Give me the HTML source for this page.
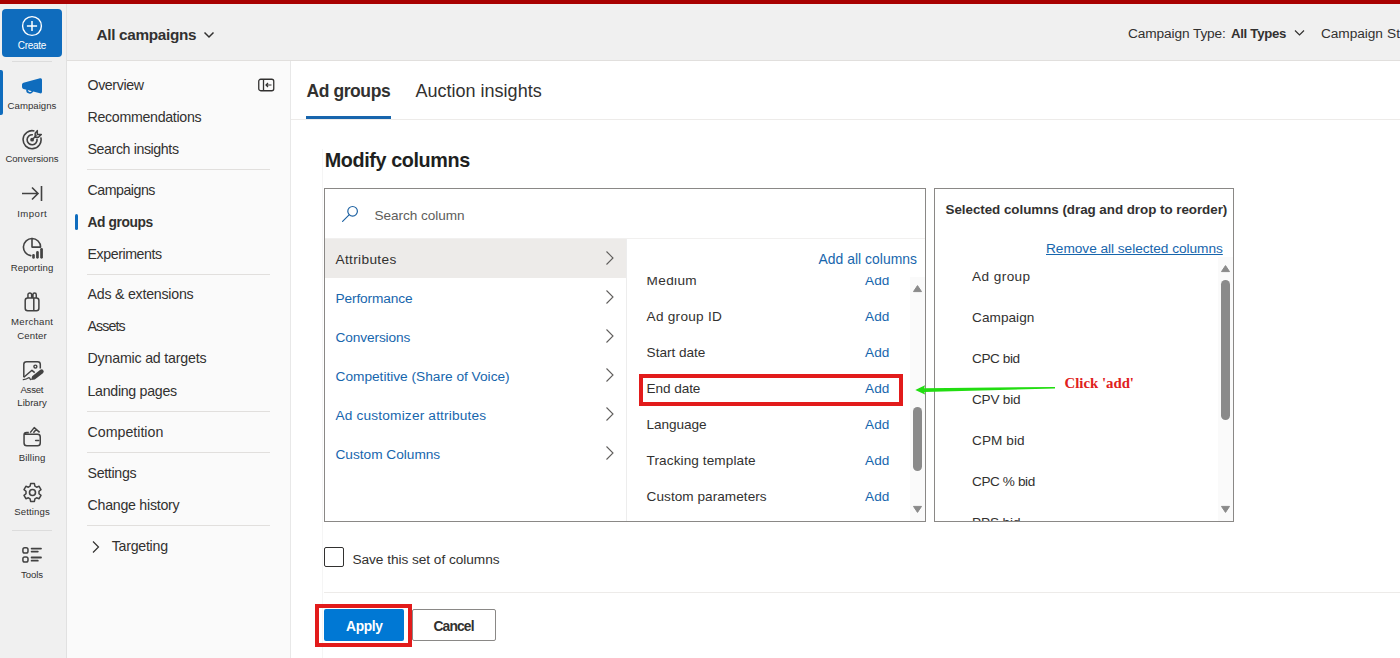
<!DOCTYPE html>
<html><head><meta charset="utf-8"><title>Modify columns</title>
<style>
html,body{margin:0;padding:0;width:1400px;height:658px;overflow:hidden;background:#fff}
body{position:relative;font-family:"Liberation Sans", sans-serif}
.r{position:absolute}
.t{position:absolute;white-space:nowrap}
</style></head><body>
<div class="r" style="left:0px;top:0px;width:1400px;height:658px;background:#ffffff"></div>
<div class="r" style="left:0px;top:0px;width:66px;height:658px;background:#f0f0f0"></div>
<div class="r" style="left:66px;top:0px;width:1px;height:658px;background:#e1e1e1"></div>
<div class="r" style="left:67px;top:0px;width:1333px;height:60px;background:#f0f0f0"></div>
<div class="r" style="left:67px;top:60px;width:1333px;height:1px;background:#e1dfdd"></div>
<div class="r" style="left:67px;top:61px;width:223px;height:597px;background:#fafafa"></div>
<div class="r" style="left:290px;top:61px;width:1px;height:597px;background:#e8e8e8"></div>
<div class="r" style="left:0px;top:0px;width:1400px;height:4px;background:#a80000"></div>
<div class="r" style="left:2px;top:9px;width:60px;height:48px;background:#0f6cbd;border-radius:4px"></div>
<svg class="r" style="left:21px;top:15px" width="22" height="22" viewBox="0 0 22 22"><circle cx="11" cy="11" r="9.4" fill="none" stroke="#fff" stroke-width="1.4"/><path d="M11 5.9v10.2M5.9 11h10.2" stroke="#fff" stroke-width="1.5"/></svg>
<div class="t" style="left:17.80px;top:39.93px;font-size:10px;line-height:12.0px;color:#fff;font-weight:400;font-family:'Liberation Sans', sans-serif;letter-spacing:-0.322px;">Create</div>
<div class="r" style="left:12px;top:61px;width:40px;height:1px;background:#dcdcdc"></div>
<div class="r" style="left:0px;top:70px;width:3px;height:45px;background:#0f6cbd;border-radius:0 2px 2px 0"></div>
<svg class="r" style="left:21px;top:76px" width="22" height="20" viewBox="0 0 22 20"><path d="M2.5 6.8 L19 2.3 Q21 1.8 21 3.8 V15.8 Q21 17.8 19 17.3 L2.5 13 Q1 12.6 1 11 V8.6 Q1 7.2 2.5 6.8 Z" fill="#0f6cbd"/><path d="M6.1 13.4 A2.8 2.8 0 0 0 11.7 14.6" fill="none" stroke="#0f6cbd" stroke-width="1.6"/></svg>
<div class="t" style="left:7.60px;top:100.21px;font-size:9.6px;line-height:11.52px;color:#323130;font-weight:400;font-family:'Liberation Sans', sans-serif;letter-spacing:0.03px;">Campaigns</div>
<svg class="r" style="left:22px;top:129px" width="22" height="22" viewBox="0 0 22 22"><path d="M12.43 2.01 A9 9 0 1 0 18.79 8.37" fill="none" stroke="#424242" stroke-width="1.6"/><path d="M10.88 5.76 A5 5 0 1 0 14.99 9.66" fill="none" stroke="#424242" stroke-width="1.6"/><circle cx="10.1" cy="10.7" r="1.9" fill="#424242"/><path d="M10.1 10.7 L14.5 6.3" stroke="#424242" stroke-width="1.6"/><path d="M15.3 1.6 L15.3 5.4 L19.3 5.4 L16.4 8.2 L13.2 8.2 L13.2 4.2 Z" fill="none" stroke="#424242" stroke-width="1.5" stroke-linejoin="round"/></svg>
<div class="t" style="left:5.40px;top:153.41px;font-size:9.6px;line-height:11.52px;color:#323130;font-weight:400;font-family:'Liberation Sans', sans-serif;letter-spacing:-0.016px;">Conversions</div>
<svg class="r" style="left:21px;top:185px" width="22" height="17" viewBox="0 0 22 17"><path d="M1 8.5 H17 M11 2.5 L17 8.5 L11 14.5 M20.5 1 V16" fill="none" stroke="#424242" stroke-width="1.6"/></svg>
<div class="t" style="left:17.20px;top:208.01px;font-size:9.6px;line-height:11.52px;color:#323130;font-weight:400;font-family:'Liberation Sans', sans-serif;letter-spacing:0.479px;">Import</div>
<svg class="r" style="left:21px;top:237px" width="23" height="23" viewBox="0 0 23 23"><path d="M11 1.5 A8.6 8.6 0 0 0 9.74 18.6" fill="none" stroke="#424242" stroke-width="1.6" stroke-linecap="round"/><path d="M11 1.5 V10.1 H19.6 A8.6 8.6 0 0 0 11 1.5 Z" fill="none" stroke="#424242" stroke-width="1.6" stroke-linejoin="round"/><rect x="11.2" y="17.1" width="2.6" height="4.6" rx="1.3" fill="#424242"/><rect x="15.1" y="14.1" width="2.7" height="7.6" rx="1.35" fill="#424242"/><rect x="19.2" y="11" width="2.7" height="10.7" rx="1.35" fill="#424242"/></svg>
<div class="t" style="left:10.70px;top:261.91px;font-size:9.6px;line-height:11.52px;color:#323130;font-weight:400;font-family:'Liberation Sans', sans-serif;letter-spacing:0.122px;">Reporting</div>
<svg class="r" style="left:23px;top:291px" width="18" height="22" viewBox="0 0 18 22"><rect x="2.2" y="7" width="13.7" height="12.7" rx="2.5" fill="none" stroke="#424242" stroke-width="1.5"/><path d="M10.8 7 V19.7" stroke="#424242" stroke-width="1.5"/><path d="M4.95 7 V3.85 A1.85 1.85 0 0 1 8.65 3.85 V7 M9.95 7 V3.65 A1.65 1.65 0 0 1 13.25 3.65 V7" fill="none" stroke="#424242" stroke-width="1.5"/></svg>
<div class="t" style="left:11.05px;top:315.91px;font-size:9.6px;line-height:11.52px;color:#323130;font-weight:400;font-family:'Liberation Sans', sans-serif;letter-spacing:0.27px;">Merchant</div>
<div class="t" style="left:17.30px;top:329.91px;font-size:9.6px;line-height:11.52px;color:#323130;font-weight:400;font-family:'Liberation Sans', sans-serif;letter-spacing:0.118px;">Center</div>
<svg class="r" style="left:22px;top:360px" width="23" height="22" viewBox="0 0 23 22"><path d="M1.8 17.3 V4.3 Q1.8 1.65 4.5 1.65 H15.6 Q18.3 1.65 18.3 4.3 V8.4" fill="none" stroke="#424242" stroke-width="1.5"/><path d="M1.8 17.3 L9.95 10.3 L12.7 12.6" fill="none" stroke="#424242" stroke-width="1.5" stroke-linejoin="round"/><circle cx="13.4" cy="6.6" r="1.5" fill="none" stroke="#424242" stroke-width="1.4"/><path d="M9 20 L10.2 16.15 L18.3 9.85 A2.1 2.1 0 0 1 20.9 13.15 L12.8 19.45 Z" fill="#424242"/><path d="M1.3 19.6 Q4.5 19.4 6.6 17.8 Q7.6 17.3 8.4 19.6" fill="none" stroke="#424242" stroke-width="1.3" stroke-linecap="round"/></svg>
<div class="t" style="left:20.45px;top:383.51px;font-size:9.6px;line-height:11.52px;color:#323130;font-weight:400;font-family:'Liberation Sans', sans-serif;letter-spacing:-0.227px;">Asset</div>
<div class="t" style="left:17.30px;top:397.41px;font-size:9.6px;line-height:11.52px;color:#323130;font-weight:400;font-family:'Liberation Sans', sans-serif;letter-spacing:0.009px;">Library</div>
<svg class="r" style="left:22px;top:426px" width="21" height="22" viewBox="0 0 21 22"><path d="M6.8 6.5 H4.6 Q2.05 6.5 2.05 9 V17.1 Q2.05 19.85 4.8 19.85 H15.5 Q18.25 19.85 18.25 17.1 V11 Q18.25 8.3 15.5 8.3 H2.05" fill="none" stroke="#424242" stroke-width="1.5"/><path d="M8.2 6.6 L12.2 1.6 L17.6 6.4 M11.4 6.7 L14.2 3.4" fill="none" stroke="#424242" stroke-width="1.5" stroke-linejoin="round"/><path d="M13.7 14.5 H16.7" stroke="#424242" stroke-width="1.6" stroke-linecap="round"/></svg>
<div class="t" style="left:18.70px;top:452.41px;font-size:9.6px;line-height:11.52px;color:#323130;font-weight:400;font-family:'Liberation Sans', sans-serif;letter-spacing:0.165px;">Billing</div>
<svg class="r" style="left:21.5px;top:481.5px" width="21" height="21" viewBox="0 0 21 21"><path d="M8.6 1.6 H12.4 L12.9 4.2 L14.6 5.2 L17.1 4.3 L19 7.6 L17 9.3 V11.7 L19 13.4 L17.1 16.7 L14.6 15.8 L12.9 16.8 L12.4 19.4 H8.6 L8.1 16.8 L6.4 15.8 L3.9 16.7 L2 13.4 L4 11.7 V9.3 L2 7.6 L3.9 4.3 L6.4 5.2 L8.1 4.2 Z" fill="none" stroke="#424242" stroke-width="1.5" stroke-linejoin="round"/><circle cx="10.5" cy="10.5" r="3" fill="none" stroke="#424242" stroke-width="1.6"/></svg>
<div class="t" style="left:14.30px;top:506.41px;font-size:9.6px;line-height:11.52px;color:#323130;font-weight:400;font-family:'Liberation Sans', sans-serif;letter-spacing:0.102px;">Settings</div>
<div class="r" style="left:12px;top:530px;width:40px;height:1px;background:#dcdcdc"></div>
<div class="r" style="left:322px;top:149px;width:1px;height:509px;background:#f5f5f5"></div>
<svg class="r" style="left:22px;top:546px" width="21" height="18" viewBox="0 0 21 18"><rect x="0.9" y="1.85" width="5.1" height="5.1" rx="1.8" fill="none" stroke="#424242" stroke-width="1.5"/><rect x="0.9" y="10.95" width="5.1" height="5.1" rx="1.8" fill="none" stroke="#424242" stroke-width="1.5"/><path d="M9.6 2.6 H19 M9.6 5.6 H15.8 M9.6 11.5 H19 M9.6 14.7 H15.8" stroke="#424242" stroke-width="1.8" stroke-linecap="round"/></svg>
<div class="t" style="left:20.90px;top:568.91px;font-size:9.6px;line-height:11.52px;color:#323130;font-weight:400;font-family:'Liberation Sans', sans-serif;letter-spacing:-0.052px;">Tools</div>
<div class="t" style="left:96.50px;top:25.52px;font-size:15.3px;line-height:18.36px;color:#323130;font-weight:700;font-family:'Liberation Sans', sans-serif;letter-spacing:-0.311px;">All campaigns</div>
<svg class="r" style="left:203px;top:31px" width="12" height="8" viewBox="0 0 12 8"><path d="M1.5 1.5 L6 6 L10.5 1.5" fill="none" stroke="#323130" stroke-width="1.5"/></svg>
<div class="t" style="left:1128.00px;top:25.83px;font-size:13.7px;line-height:16.44px;color:#323130;font-weight:400;font-family:'Liberation Sans', sans-serif;letter-spacing:-0.117px;">Campaign Type:</div>
<div class="t" style="left:1231.00px;top:26.30px;font-size:13.2px;line-height:15.84px;color:#323130;font-weight:700;font-family:'Liberation Sans', sans-serif;letter-spacing:-0.289px;">All Types</div>
<svg class="r" style="left:1294px;top:29px" width="11" height="8" viewBox="0 0 11 8"><path d="M1 1.5 L5.5 6 L10 1.5" fill="none" stroke="#323130" stroke-width="1.2"/></svg>
<div class="t" style="left:1321.00px;top:25.83px;font-size:13.7px;line-height:16.44px;color:#323130;font-weight:400;font-family:'Liberation Sans', sans-serif;letter-spacing:-0.064px;">Campaign</div>
<div class="t" style="left:1387.00px;top:25.83px;font-size:13.7px;line-height:16.44px;color:#323130;font-weight:400;font-family:'Liberation Sans', sans-serif;letter-spacing:0.232px;">Status</div>
<div class="t" style="left:87.50px;top:76.66px;font-size:14.2px;line-height:17.04px;color:#323130;font-weight:400;font-family:'Liberation Sans', sans-serif;letter-spacing:-0.388px;">Overview</div>
<div class="t" style="left:87.50px;top:108.76px;font-size:14.2px;line-height:17.04px;color:#323130;font-weight:400;font-family:'Liberation Sans', sans-serif;letter-spacing:-0.299px;">Recommendations</div>
<div class="t" style="left:87.50px;top:140.86px;font-size:14.2px;line-height:17.04px;color:#323130;font-weight:400;font-family:'Liberation Sans', sans-serif;letter-spacing:-0.392px;">Search insights</div>
<div class="t" style="left:87.50px;top:182.36px;font-size:14.2px;line-height:17.04px;color:#323130;font-weight:400;font-family:'Liberation Sans', sans-serif;letter-spacing:-0.478px;">Campaigns</div>
<div class="t" style="left:87.50px;top:214.94px;font-size:13.8px;line-height:16.56px;color:#323130;font-weight:700;font-family:'Liberation Sans', sans-serif;letter-spacing:-0.413px;">Ad groups</div>
<div class="t" style="left:87.50px;top:246.16px;font-size:14.2px;line-height:17.04px;color:#323130;font-weight:400;font-family:'Liberation Sans', sans-serif;letter-spacing:-0.422px;">Experiments</div>
<div class="t" style="left:87.50px;top:286.26px;font-size:14.2px;line-height:17.04px;color:#323130;font-weight:400;font-family:'Liberation Sans', sans-serif;letter-spacing:-0.228px;">Ads &amp; extensions</div>
<div class="t" style="left:87.50px;top:318.36px;font-size:14.2px;line-height:17.04px;color:#323130;font-weight:400;font-family:'Liberation Sans', sans-serif;letter-spacing:-0.883px;">Assets</div>
<div class="t" style="left:87.50px;top:350.46px;font-size:14.2px;line-height:17.04px;color:#323130;font-weight:400;font-family:'Liberation Sans', sans-serif;letter-spacing:-0.184px;">Dynamic ad targets</div>
<div class="t" style="left:87.50px;top:382.56px;font-size:14.2px;line-height:17.04px;color:#323130;font-weight:400;font-family:'Liberation Sans', sans-serif;letter-spacing:-0.29px;">Landing pages</div>
<div class="t" style="left:87.50px;top:423.96px;font-size:14.2px;line-height:17.04px;color:#323130;font-weight:400;font-family:'Liberation Sans', sans-serif;letter-spacing:0.013px;">Competition</div>
<div class="t" style="left:87.50px;top:464.56px;font-size:14.2px;line-height:17.04px;color:#323130;font-weight:400;font-family:'Liberation Sans', sans-serif;letter-spacing:-0.315px;">Settings</div>
<div class="t" style="left:87.50px;top:496.66px;font-size:14.2px;line-height:17.04px;color:#323130;font-weight:400;font-family:'Liberation Sans', sans-serif;letter-spacing:-0.255px;">Change history</div>
<div class="t" style="left:111.70px;top:538.16px;font-size:14.2px;line-height:17.04px;color:#323130;font-weight:400;font-family:'Liberation Sans', sans-serif;letter-spacing:-0.252px;">Targeting</div>
<svg class="r" style="left:91px;top:540px" width="10" height="14" viewBox="0 0 10 14"><path d="M2 1.5 L7.5 7 L2 12.5" fill="none" stroke="#323130" stroke-width="1.2"/></svg>
<div class="r" style="left:87px;top:169px;width:183px;height:1px;background:#e1dfdd"></div>
<div class="r" style="left:87px;top:274px;width:183px;height:1px;background:#e1dfdd"></div>
<div class="r" style="left:87px;top:411px;width:183px;height:1px;background:#e1dfdd"></div>
<div class="r" style="left:87px;top:452px;width:183px;height:1px;background:#e1dfdd"></div>
<div class="r" style="left:87px;top:525px;width:183px;height:1px;background:#e1dfdd"></div>
<div class="r" style="left:75px;top:214px;width:3px;height:16px;background:#0f6cbd;border-radius:2px"></div>
<svg class="r" style="left:258px;top:78px" width="17" height="14" viewBox="0 0 17 14"><rect x="0.75" y="1.25" width="15" height="11.5" rx="2" fill="none" stroke="#323130" stroke-width="1.3"/><path d="M5.5 1.25 V12.75" stroke="#323130" stroke-width="1.3"/><path d="M13.5 7 H8 M10 5 L8 7 L10 9" fill="none" stroke="#323130" stroke-width="1.2"/></svg>
<div class="t" style="left:306.40px;top:80.83px;font-size:17.5px;line-height:21.0px;color:#323130;font-weight:700;font-family:'Liberation Sans', sans-serif;letter-spacing:-0.4px;">Ad groups</div>
<div class="t" style="left:415.40px;top:81.06px;font-size:18px;line-height:21.6px;color:#323130;font-weight:400;font-family:'Liberation Sans', sans-serif;letter-spacing:0.015px;">Auction insights</div>
<div class="r" style="left:306px;top:116px;width:85px;height:3px;background:#1765ad"></div>
<div class="r" style="left:291px;top:119px;width:1109px;height:1px;background:#edebe9"></div>
<div class="t" style="left:324.70px;top:148.76px;font-size:19.8px;line-height:23.76px;color:#201f1e;font-weight:700;font-family:'Liberation Sans', sans-serif;letter-spacing:-0.392px;">Modify columns</div>
<div class="r" style="left:324px;top:188px;width:602px;height:334px;border:1px solid #8a8886;box-sizing:border-box;background:#fff"></div>
<svg class="r" style="left:341px;top:205px" width="18" height="18" viewBox="0 0 18 18"><circle cx="11.6" cy="6.3" r="4.8" fill="none" stroke="#1f63a3" stroke-width="1.2"/><path d="M8.1 9.8 L1.6 16.3" stroke="#1f63a3" stroke-width="1.2" stroke-linecap="round"/></svg>
<div class="t" style="left:374.60px;top:207.92px;font-size:13.6px;line-height:16.32px;color:#605e5c;font-weight:400;font-family:'Liberation Sans', sans-serif;letter-spacing:-0.059px;">Search column</div>
<div class="r" style="left:325px;top:239px;width:301px;height:39px;background:#edebe9"></div>
<div class="r" style="left:325px;top:238px;width:600px;height:1px;background:#f1f0ef"></div>
<div class="r" style="left:626px;top:239px;width:1px;height:282px;background:#ededed"></div>
<div class="t" style="left:335.50px;top:251.83px;font-size:13.7px;line-height:16.44px;color:#323130;font-weight:400;font-family:'Liberation Sans', sans-serif;letter-spacing:0.326px;">Attributes</div>
<svg class="r" style="left:605px;top:250px" width="10" height="16" viewBox="0 0 10 16"><path d="M1.5 1.5 L8 8 L1.5 14.5" fill="none" stroke="#605e5c" stroke-width="1.1"/></svg>
<div class="t" style="left:335.50px;top:290.83px;font-size:13.7px;line-height:16.44px;color:#1766ad;font-weight:400;font-family:'Liberation Sans', sans-serif;letter-spacing:-0.123px;">Performance</div>
<svg class="r" style="left:605px;top:289px" width="10" height="16" viewBox="0 0 10 16"><path d="M1.5 1.5 L8 8 L1.5 14.5" fill="none" stroke="#605e5c" stroke-width="1.1"/></svg>
<div class="t" style="left:335.50px;top:329.83px;font-size:13.7px;line-height:16.44px;color:#1766ad;font-weight:400;font-family:'Liberation Sans', sans-serif;letter-spacing:-0.124px;">Conversions</div>
<svg class="r" style="left:605px;top:328px" width="10" height="16" viewBox="0 0 10 16"><path d="M1.5 1.5 L8 8 L1.5 14.5" fill="none" stroke="#605e5c" stroke-width="1.1"/></svg>
<div class="t" style="left:335.50px;top:368.83px;font-size:13.7px;line-height:16.44px;color:#1766ad;font-weight:400;font-family:'Liberation Sans', sans-serif;letter-spacing:-0.003px;">Competitive (Share of Voice)</div>
<svg class="r" style="left:605px;top:367px" width="10" height="16" viewBox="0 0 10 16"><path d="M1.5 1.5 L8 8 L1.5 14.5" fill="none" stroke="#605e5c" stroke-width="1.1"/></svg>
<div class="t" style="left:335.50px;top:407.83px;font-size:13.7px;line-height:16.44px;color:#1766ad;font-weight:400;font-family:'Liberation Sans', sans-serif;letter-spacing:0.167px;">Ad customizer attributes</div>
<svg class="r" style="left:605px;top:406px" width="10" height="16" viewBox="0 0 10 16"><path d="M1.5 1.5 L8 8 L1.5 14.5" fill="none" stroke="#605e5c" stroke-width="1.1"/></svg>
<div class="t" style="left:335.50px;top:446.83px;font-size:13.7px;line-height:16.44px;color:#1766ad;font-weight:400;font-family:'Liberation Sans', sans-serif;letter-spacing:-0.02px;">Custom Columns</div>
<svg class="r" style="left:605px;top:445px" width="10" height="16" viewBox="0 0 10 16"><path d="M1.5 1.5 L8 8 L1.5 14.5" fill="none" stroke="#605e5c" stroke-width="1.1"/></svg>
<div class="t" style="left:818.50px;top:251.34px;font-size:13.9px;line-height:16.68px;color:#1766ad;font-weight:400;font-family:'Liberation Sans', sans-serif;letter-spacing:0.027px;">Add all columns</div>
<div class="r" style="left:626px;top:277px;width:284px;height:244px;overflow:hidden;">
<div class="t" style="left:20.60px;top:-4.28px;font-size:13.6px;line-height:16.32px;color:#323130;font-weight:400;font-family:'Liberation Sans', sans-serif;letter-spacing:0.345px;">Medium</div>
<div class="t" style="left:239.00px;top:-4.28px;font-size:13.6px;line-height:16.32px;color:#1766ad;font-weight:400;font-family:'Liberation Sans', sans-serif;letter-spacing:0.103px;">Add</div>
<div class="t" style="left:20.60px;top:31.72px;font-size:13.6px;line-height:16.32px;color:#323130;font-weight:400;font-family:'Liberation Sans', sans-serif;letter-spacing:0.263px;">Ad group ID</div>
<div class="t" style="left:239.00px;top:31.72px;font-size:13.6px;line-height:16.32px;color:#1766ad;font-weight:400;font-family:'Liberation Sans', sans-serif;letter-spacing:0.103px;">Add</div>
<div class="t" style="left:20.60px;top:67.72px;font-size:13.6px;line-height:16.32px;color:#323130;font-weight:400;font-family:'Liberation Sans', sans-serif;letter-spacing:-0.019px;">Start date</div>
<div class="t" style="left:239.00px;top:67.72px;font-size:13.6px;line-height:16.32px;color:#1766ad;font-weight:400;font-family:'Liberation Sans', sans-serif;letter-spacing:0.103px;">Add</div>
<div class="t" style="left:20.60px;top:103.72px;font-size:13.6px;line-height:16.32px;color:#323130;font-weight:400;font-family:'Liberation Sans', sans-serif;letter-spacing:-0.092px;">End date</div>
<div class="t" style="left:239.00px;top:103.72px;font-size:13.6px;line-height:16.32px;color:#1766ad;font-weight:400;font-family:'Liberation Sans', sans-serif;letter-spacing:0.103px;">Add</div>
<div class="t" style="left:20.60px;top:139.72px;font-size:13.6px;line-height:16.32px;color:#323130;font-weight:400;font-family:'Liberation Sans', sans-serif;letter-spacing:-0.072px;">Language</div>
<div class="t" style="left:239.00px;top:139.72px;font-size:13.6px;line-height:16.32px;color:#1766ad;font-weight:400;font-family:'Liberation Sans', sans-serif;letter-spacing:0.103px;">Add</div>
<div class="t" style="left:20.60px;top:175.72px;font-size:13.6px;line-height:16.32px;color:#323130;font-weight:400;font-family:'Liberation Sans', sans-serif;letter-spacing:0.094px;">Tracking template</div>
<div class="t" style="left:239.00px;top:175.72px;font-size:13.6px;line-height:16.32px;color:#1766ad;font-weight:400;font-family:'Liberation Sans', sans-serif;letter-spacing:0.103px;">Add</div>
<div class="t" style="left:20.60px;top:211.72px;font-size:13.6px;line-height:16.32px;color:#323130;font-weight:400;font-family:'Liberation Sans', sans-serif;letter-spacing:0.042px;">Custom parameters</div>
<div class="t" style="left:239.00px;top:211.72px;font-size:13.6px;line-height:16.32px;color:#1766ad;font-weight:400;font-family:'Liberation Sans', sans-serif;letter-spacing:0.103px;">Add</div>
</div>
<div class="r" style="left:910px;top:277px;width:15px;height:244px;background:#fafafa"></div>
<svg class="r" style="left:912px;top:284px" width="11" height="9" viewBox="0 0 11 9"><path d="M1.5 7.6 L5.5 1.6 L9.5 7.6 Z" fill="#8a8a8a" stroke="#8a8a8a" stroke-width="1" stroke-linejoin="round"/></svg>
<svg class="r" style="left:912px;top:505px" width="11" height="9" viewBox="0 0 11 9"><path d="M1.5 1.4 L5.5 7.4 L9.5 1.4 Z" fill="#8a8a8a" stroke="#8a8a8a" stroke-width="1" stroke-linejoin="round"/></svg>
<div class="r" style="left:913px;top:407px;width:9px;height:64px;background:#8a8a8a;border-radius:4.5px"></div>
<div class="r" style="left:934px;top:188px;width:300px;height:334px;border:1px solid #8a8886;box-sizing:border-box;background:#fff"></div>
<div class="t" style="left:945.50px;top:202.11px;font-size:13.4px;line-height:16.08px;color:#323130;font-weight:700;font-family:'Liberation Sans', sans-serif;letter-spacing:-0.04px;">Selected columns (drag and drop to reorder)</div>
<div class="t" style="left:1046.00px;top:240.53px;font-size:13.7px;line-height:16.44px;color:#1766ad;font-weight:400;font-family:'Liberation Sans', sans-serif;letter-spacing:-0.045px;text-decoration:underline">Remove all selected columns</div>
<div class="r" style="left:935px;top:257px;width:283px;height:264px;overflow:hidden">
<div class="t" style="left:37.00px;top:11.82px;font-size:13.6px;line-height:16.32px;color:#323130;font-weight:400;font-family:'Liberation Sans', sans-serif;letter-spacing:0.428px;">Ad group</div>
<div class="t" style="left:37.00px;top:52.82px;font-size:13.6px;line-height:16.32px;color:#323130;font-weight:400;font-family:'Liberation Sans', sans-serif;letter-spacing:0.059px;">Campaign</div>
<div class="t" style="left:37.00px;top:93.82px;font-size:13.6px;line-height:16.32px;color:#323130;font-weight:400;font-family:'Liberation Sans', sans-serif;letter-spacing:-0.408px;">CPC bid</div>
<div class="t" style="left:37.00px;top:134.82px;font-size:13.6px;line-height:16.32px;color:#323130;font-weight:400;font-family:'Liberation Sans', sans-serif;letter-spacing:-0.231px;">CPV bid</div>
<div class="t" style="left:37.00px;top:175.82px;font-size:13.6px;line-height:16.32px;color:#323130;font-weight:400;font-family:'Liberation Sans', sans-serif;letter-spacing:0.091px;">CPM bid</div>
<div class="t" style="left:37.00px;top:216.82px;font-size:13.6px;line-height:16.32px;color:#323130;font-weight:400;font-family:'Liberation Sans', sans-serif;letter-spacing:-0.402px;">CPC % bid</div>
<div class="t" style="left:37.00px;top:257.82px;font-size:13.6px;line-height:16.32px;color:#323130;font-weight:400;font-family:'Liberation Sans', sans-serif;letter-spacing:-0.106px;">PPS bid</div>
</div>
<div class="r" style="left:1218px;top:257px;width:15px;height:264px;background:#fafafa"></div>
<svg class="r" style="left:1220px;top:264px" width="11" height="9" viewBox="0 0 11 9"><path d="M1.5 7.6 L5.5 1.6 L9.5 7.6 Z" fill="#8a8a8a" stroke="#8a8a8a" stroke-width="1" stroke-linejoin="round"/></svg>
<svg class="r" style="left:1220px;top:505px" width="11" height="9" viewBox="0 0 11 9"><path d="M1.5 1.4 L5.5 7.4 L9.5 1.4 Z" fill="#8a8a8a" stroke="#8a8a8a" stroke-width="1" stroke-linejoin="round"/></svg>
<div class="r" style="left:1221px;top:280px;width:9px;height:140px;background:#8a8a8a;border-radius:4.5px"></div>
<div class="r" style="left:639px;top:374px;width:264px;height:32px;border:4px solid #e21b1b;box-sizing:border-box"></div>
<svg class="r" style="left:910px;top:380px" width="150" height="20" viewBox="0 0 150 20"><path d="M5.3 9.9 L15 5.2 L14.2 8.3 L145 6.9 L145 8.6 L14.4 12 L15 14.6 Z" fill="#22dd11"/></svg>
<div class="t" style="left:1064.50px;top:374.73px;font-size:14.8px;line-height:17.76px;color:#e02020;font-weight:700;font-family:'Liberation Serif', serif;letter-spacing:-0.0px;">Click 'add'</div>
<div class="r" style="left:324px;top:547px;width:20px;height:20px;border:1px solid #323130;border-radius:2px;box-sizing:border-box"></div>
<div class="t" style="left:352.40px;top:551.83px;font-size:13.7px;line-height:16.44px;color:#323130;font-weight:400;font-family:'Liberation Sans', sans-serif;letter-spacing:-0.051px;">Save this set of columns</div>
<div class="r" style="left:324px;top:592px;width:1076px;height:1px;background:#edebe9"></div>
<div class="r" style="left:324px;top:609px;width:80px;height:32px;background:#0078d4;border-radius:2px"></div>
<div class="t" style="left:346.00px;top:619.44px;font-size:13.8px;line-height:16.56px;color:#fff;font-weight:700;font-family:'Liberation Sans', sans-serif;letter-spacing:-0.334px;">Apply</div>
<div class="r" style="left:412px;top:609px;width:84px;height:32px;border:1px solid #8a8886;border-radius:2px;box-sizing:border-box;background:#fff"></div>
<div class="t" style="left:433.50px;top:619.44px;font-size:13.8px;line-height:16.56px;color:#323130;font-weight:700;font-family:'Liberation Sans', sans-serif;letter-spacing:-0.85px;">Cancel</div>
<div class="r" style="left:315px;top:604px;width:97px;height:43px;border:4px solid #e21b1b;box-sizing:border-box"></div>
</body></html>
